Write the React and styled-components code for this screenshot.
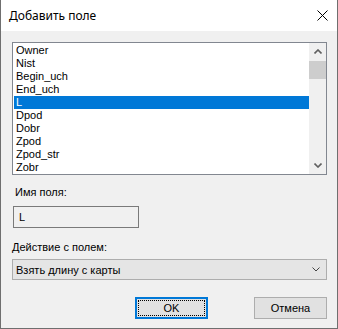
import React from "react";
import styled, { createGlobalStyle } from "styled-components";

const Global = createGlobalStyle`
  html, body { margin: 0; padding: 0; background: #ffffff; }
  * { box-sizing: border-box; }
`;

const Window = styled.div`
  width: 338px;
  height: 329px;
  display: flex;
  flex-direction: column;
  border: 1px solid #6f6f6f;
  border-top: none;
  background: #f0f0f0;
  font-family: "Liberation Sans", Arial, sans-serif;
  font-size: 11px;
  color: #000;
`;

const TitleBar = styled.div`
  height: 31px;
  flex: none;
  background: #ffffff;
  display: flex;
  align-items: center;
  justify-content: space-between;
  padding: 0 9px 0 8px;
`;

const Title = styled.span`
  font-family: "Noto Sans", "Open Sans", sans-serif;
  font-size: 12px;
  color: #000;
  margin-top: -1px;
`;

const Body = styled.div`
  flex: 1;
  display: flex;
  flex-direction: column;
  padding: 11px 10px 0 11px;
`;

const ListBox = styled.div`
  height: 133px;
  border: 1px solid #828790;
  background: #fff;
  display: flex;
  overflow: hidden;
`;

const Items = styled.div`
  flex: 1;
  padding: 1px 0 0 1px;
`;

const Item = styled.div`
  height: 13px;
  line-height: 13px;
  padding-left: 2px;
  background: ${p => (p.$selected ? "#0078d7" : "transparent")};
  color: ${p => (p.$selected ? "#fff" : "#000")};
  white-space: nowrap;
`;

const ScrollBar = styled.div`
  width: 17px;
  flex: none;
  background: #f0f0f0;
  display: flex;
  flex-direction: column;
`;

const ScrollBtn = styled.div`
  height: 17px;
  display: flex;
  align-items: center;
  justify-content: center;
`;

const Track = styled.div`
  flex: 1;
  padding-top: 1px;
`;

const Thumb = styled.div`
  height: 18px;
  background: #cdcdcd;
`;

const Label = styled.div`
  height: 13px;
  line-height: 13px;
  margin-top: ${p => p.$mt}px;
  padding-left: ${p => p.$pl || 0}px;
`;

const TextField = styled.div`
  margin-top: 7px;
  margin-left: 1px;
  width: 126px;
  height: 22px;
  border: 1px solid #7a7a7a;
  background: #f0f0f0;
  padding-left: 5px;
  display: flex;
  align-items: center;
`;

const Combo = styled.div`
  margin-top: 5px;
  height: 21px;
  border: 1px solid #adadad;
  background: #e5e5e5;
  display: flex;
  align-items: center;
  justify-content: space-between;
  padding: 0 6px 0 3px;
`;

const Buttons = styled.div`
  margin-top: 17px;
  display: flex;
  justify-content: flex-end;
  gap: 46px;
  padding-right: 0;
`;

const Button = styled.div`
  width: 73px;
  height: 22px;
  background: #e1e1e1;
  border: ${p => (p.$default ? "2px solid #0078d7" : "1px solid #adadad")};
  display: flex;
  align-items: center;
  justify-content: center;
  padding: ${p => (p.$default ? "1px" : "0")};
`;

const Focus = styled.div`
  width: 100%;
  height: 100%;
  border: 1px dotted #000;
  display: flex;
  align-items: center;
  justify-content: center;
`;

const items = ["Owner", "Nist", "Begin_uch", "End_uch", "L", "Dpod", "Dobr", "Zpod", "Zpod_str", "Zobr"];

export default function App() {
  return (
    <>
      <Global />
      <Window>
        <TitleBar>
          <Title>Добавить поле</Title>
          <svg width="11" height="11" viewBox="0 0 11 11">
            <path d="M0.5 0.5 L10.5 10.5 M10.5 0.5 L0.5 10.5" stroke="#000" strokeWidth="1" />
          </svg>
        </TitleBar>
        <Body>
          <ListBox>
            <Items>
              {items.map(it => (
                <Item key={it} $selected={it === "L"}>{it}</Item>
              ))}
            </Items>
            <ScrollBar>
              <ScrollBtn>
                <svg width="8" height="5" viewBox="0 0 8 5">
                  <path d="M0.5 4.5 L4 1 L7.5 4.5" stroke="#606060" strokeWidth="1.6" fill="none" />
                </svg>
              </ScrollBtn>
              <Track><Thumb /></Track>
              <ScrollBtn>
                <svg width="8" height="5" viewBox="0 0 8 5">
                  <path d="M0.5 0.5 L4 4 L7.5 0.5" stroke="#606060" strokeWidth="1.6" fill="none" />
                </svg>
              </ScrollBtn>
            </ScrollBar>
          </ListBox>
          <Label $mt={11} $pl={3}>Имя поля:</Label>
          <TextField>L</TextField>
          <Label $mt={13}>Действие с полем:</Label>
          <Combo>
            <span>Взять длину с карты</span>
            <svg width="8" height="5" viewBox="0 0 8 5">
              <path d="M0.5 0.5 L4 4 L7.5 0.5" stroke="#444" strokeWidth="1" fill="none" />
            </svg>
          </Combo>
          <Buttons>
            <Button $default><Focus>OK</Focus></Button>
            <Button>Отмена</Button>
          </Buttons>
        </Body>
      </Window>
    </>
  );
}
